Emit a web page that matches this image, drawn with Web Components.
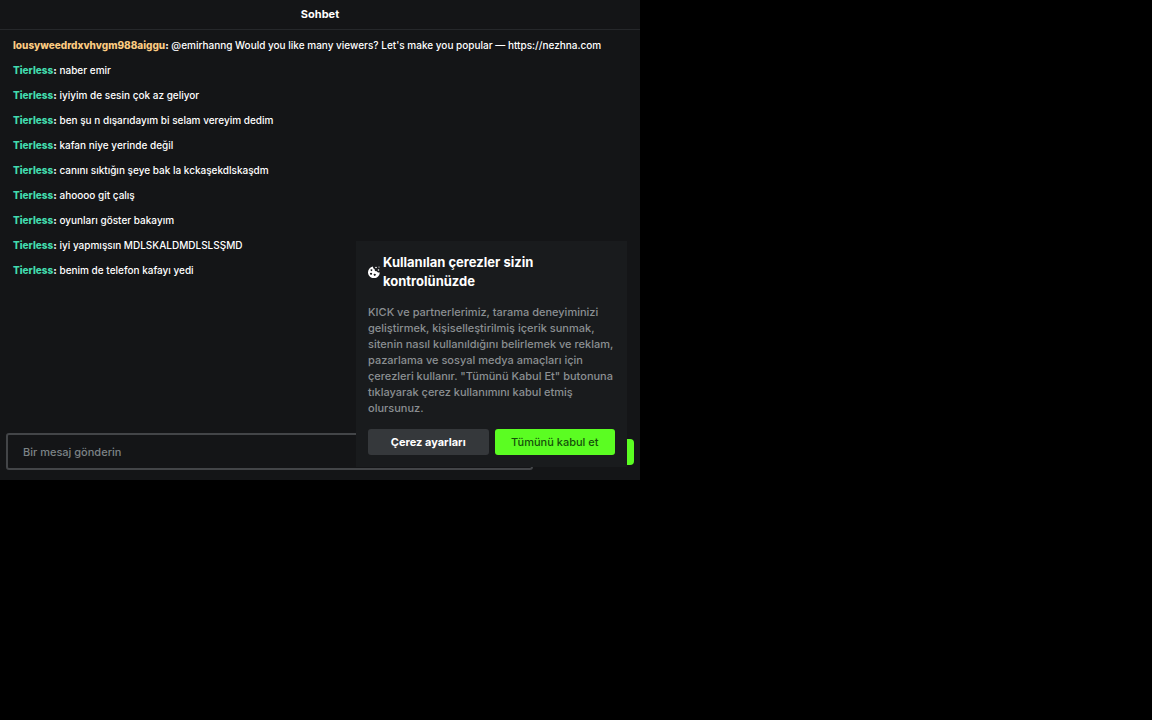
<!DOCTYPE html>
<html lang="tr">
<head>
  <meta charset="utf-8">
  <meta name="viewport" content="width=device-width, initial-scale=1">
  <title>Sohbet</title>
  <style>
    body {
      margin: 0;
      background-color: #000;
      color: #fff;
      font-family: Inter, "Liberation Sans", sans-serif;
      font-size: 11px;
    }
  </style>
</head>
<body>
  <app-stage>
    <chat-panel heading="Sohbet">
      <chat-message user="lousyweedrdxvhvgm988aiggu" color="#fbcb82">@emirhanng Would you like many viewers? Let's make you popular — https://nezhna.com</chat-message>
      <chat-message user="Tierless">naber emir</chat-message>
      <chat-message user="Tierless">iyiyim de sesin çok az geliyor</chat-message>
      <chat-message user="Tierless">ben şu n dışarıdayım bi selam vereyim dedim</chat-message>
      <chat-message user="Tierless">kafan niye yerinde değil</chat-message>
      <chat-message user="Tierless">canını sıktığın şeye bak la kckaşekdlskaşdm</chat-message>
      <chat-message user="Tierless">ahoooo git çalış</chat-message>
      <chat-message user="Tierless">oyunları göster bakayım</chat-message>
      <chat-message user="Tierless">iyi yapmışsın MDLSKALDMDLSLSŞMD</chat-message>
      <chat-message user="Tierless">benim de telefon kafayı yedi</chat-message>
      <chat-input slot="footer"></chat-input>
      <cookie-banner slot="overlay">
        <span slot="title">Kullanılan çerezler sizin kontrolünüzde</span>
        KICK ve partnerlerimiz, tarama deneyiminizi geliştirmek, kişiselleştirilmiş içerik sunmak, sitenin nasıl kullanıldığını belirlemek ve reklam, pazarlama ve sosyal medya amaçları için çerezleri kullanır. "Tümünü Kabul Et" butonuna tıklayarak çerez kullanımını kabul etmiş olursunuz.
      </cookie-banner>
    </chat-panel>
  </app-stage>

  <script>
    class AppStage extends HTMLElement {
      constructor() {
        super();
        this.attachShadow({ mode: 'open' }).innerHTML = `
          <style>
            :host {
              display: grid;
              grid-template-columns: 5fr 4fr;
              grid-template-rows: 2fr 1fr;
              min-height: 100vh;
            }
          </style>
          <slot></slot>
        `;
      }
    }

    class ChatPanel extends HTMLElement {
      constructor() {
        super();
        this.attachShadow({ mode: 'open' }).innerHTML = `
          <style>
            :host {
              display: flex;
              flex-direction: column;
              position: relative;
              background-color: #141517;
            }
            header {
              padding: 5px 12px;
              border-bottom: 1px solid #26282b;
              text-align: center;
            }
            h1 {
              margin: 0;
              font-size: 11px;
              line-height: 19px;
              font-weight: 700;
            }
            .messages {
              flex: 1;
              display: flex;
              flex-direction: column;
              gap: 10px;
              padding: 8px 13px;
            }
          </style>
          <header><h1></h1></header>
          <div class="messages" role="log"><slot></slot></div>
          <slot name="footer"></slot>
          <slot name="overlay"></slot>
        `;
      }

      connectedCallback() {
        this.shadowRoot.querySelector('h1').textContent = this.getAttribute('heading');
      }
    }

    class ChatMessage extends HTMLElement {
      constructor() {
        super();
        this.attachShadow({ mode: 'open' }).innerHTML = `
          <style>
            :host {
              display: block;
              font-size: 10px;
              line-height: 15px;
              font-weight: 500;
            }
            .user {
              color: #42dcae;
              font-weight: 800;
            }
            .colon {
              font-weight: 800;
            }
          </style>
          <span class="user"></span><span class="colon">:</span> <slot></slot>
        `;
      }

      connectedCallback() {
        const user = this.shadowRoot.querySelector('.user');
        user.textContent = this.getAttribute('user');
        if (this.hasAttribute('color')) {
          user.style.color = this.getAttribute('color');
        }
      }
    }

    class ChatInput extends HTMLElement {
      constructor() {
        super();
        this.attachShadow({ mode: 'open' }).innerHTML = `
          <style>
            :host {
              display: block;
            }
            form {
              display: flex;
              align-items: center;
              gap: 8px;
              padding: 6px 6px 10px;
            }
            input {
              flex: 1;
              min-width: 0;
              box-sizing: border-box;
              height: 37px;
              padding: 0 15px;
              border: 2px solid #434548;
              border-radius: 3px;
              background-color: #141517;
              color: #fff;
              font: inherit;
              font-weight: 500;
            }
            input::placeholder {
              color: #7c8386;
              opacity: 1;
            }
            button {
              width: 93px;
              height: 26px;
              border: 0;
              border-radius: 4px;
              background-color: #5bfd22;
              cursor: pointer;
            }
          </style>
          <form>
            <input type="text" placeholder="Bir mesaj gönderin" aria-label="Bir mesaj gönderin">
            <button type="submit" aria-label="Gönder"></button>
          </form>
        `;
      }

      connectedCallback() {
        this.shadowRoot.querySelector('form').addEventListener('submit', (event) => {
          event.preventDefault();
        });
      }
    }

    class CookieBanner extends HTMLElement {
      constructor() {
        super();
        this.attachShadow({ mode: 'open' }).innerHTML = `
          <style>
            /* Floats over the chat and its input */
            :host {
              position: absolute;
              right: 13px;
              bottom: 13px;
              width: 271px;
              max-width: 100%;
              box-sizing: border-box;
              padding: 12px;
              background-color: #191b1d;
            }
            .title {
              display: flex;
              align-items: center;
              gap: 3px;
            }
            svg {
              flex: none;
              width: 12px;
              height: 12px;
            }
            h2 {
              margin: 0;
              font-size: 13px;
              line-height: 19px;
              font-weight: 700;
            }
            p {
              margin: 13px 0;
              color: #8b8f92;
              font-size: 11px;
              line-height: 16px;
              font-weight: 500;
            }
            .actions {
              display: grid;
              grid-template-columns: 1fr 1fr;
              gap: 6px;
            }
            button {
              height: 26px;
              padding: 0;
              border: 0;
              border-radius: 3px;
              background-color: #35383b;
              color: #fff;
              font: inherit;
              font-weight: 700;
              cursor: pointer;
            }
            .accept {
              background-color: #5bfd22;
              color: #14500a;
              font-weight: 500;
            }
          </style>
          <div class="title">
            <svg viewBox="0 0 12 12" aria-hidden="true">
              <path fill="#fff" fill-rule="evenodd" d="M5 .5C5 2 5.400 2.800 6.600 3 6.500 4.700 7.500 5.500 8.800 5.300 9.300 6.300 10.300 6.800 11.800 6.500A5.900 5.900 0 1 1 5 .5ZM3.400 3.200a.9.9 0 1 0 .1 0ZM3 6.700a1 1 0 1 0 .1 0ZM6.700 7.700a1 1 0 1 0 .1 0Z"/>
              <circle cx="8" cy="1.500" r=".8" fill="#fff"/>
              <circle cx="11" cy="1" r=".6" fill="#fff"/>
              <circle cx="10.500" cy="4" r=".8" fill="#fff"/>
            </svg>
            <h2><slot name="title"></slot></h2>
          </div>
          <p><slot></slot></p>
          <div class="actions">
            <button type="button">Çerez ayarları</button>
            <button type="button" class="accept">Tümünü kabul et</button>
          </div>
        `;
      }

      connectedCallback() {
        this.shadowRoot.querySelectorAll('button').forEach((button) => {
          button.addEventListener('click', () => this.remove());
        });
      }
    }

    customElements.define('app-stage', AppStage);
    customElements.define('chat-panel', ChatPanel);
    customElements.define('chat-message', ChatMessage);
    customElements.define('chat-input', ChatInput);
    customElements.define('cookie-banner', CookieBanner);
  </script>
</body>
</html>
